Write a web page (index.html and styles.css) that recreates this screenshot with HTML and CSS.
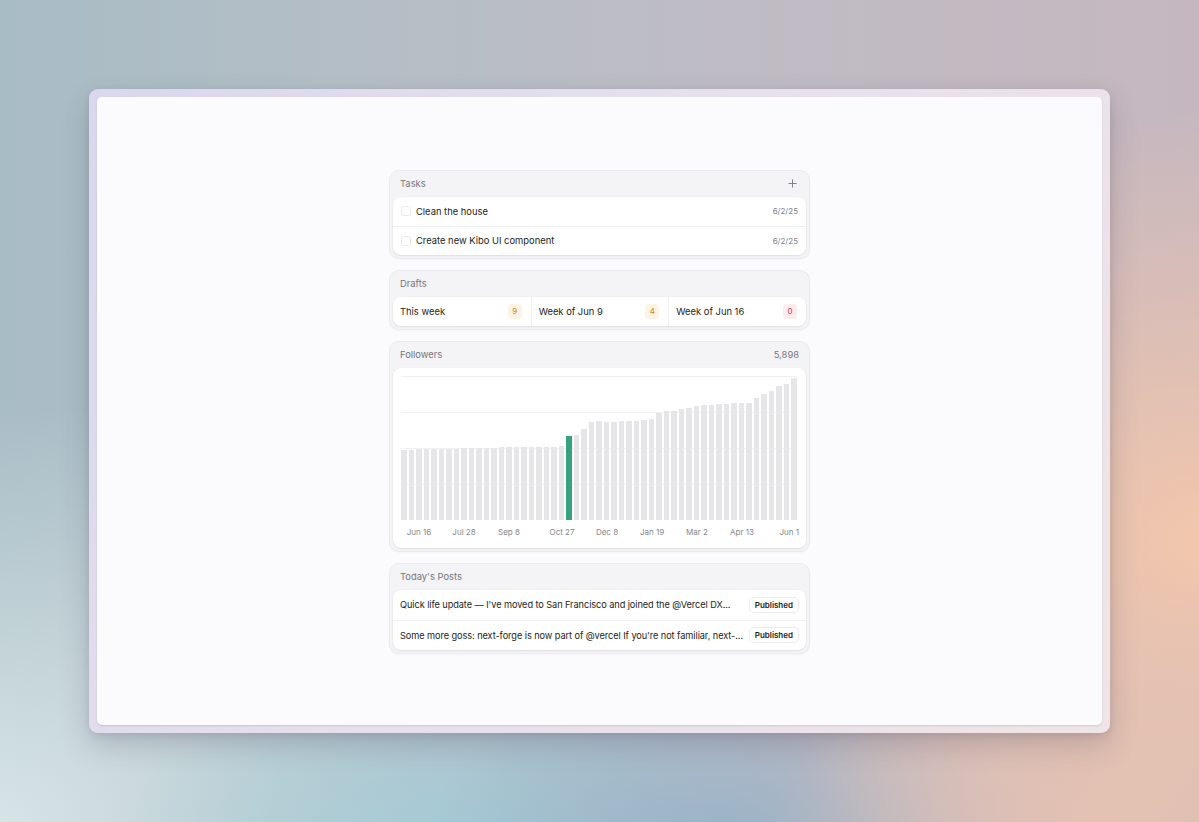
FILE: index.html
```html
<!DOCTYPE html>
<html>
<head>
<meta charset="utf-8">
<link rel="stylesheet" href="styles.css">
</head>
<body>
<div class="frame">
  <div class="page">
    <div class="stack">
      <section class="card">
        <header class="card-head">
          <span>Tasks</span>
          <svg class="plus" width="9" height="9" viewBox="0 0 10 10"><path d="M5 0.5V9.5M0.5 5H9.5" stroke="#75757c" stroke-width="1" fill="none"/></svg>
        </header>
        <div class="panel">
          <div class="task-row"><span class="check"></span><span class="task-text">Clean the house</span><span class="date">6/2/25</span></div>
          <div class="task-row"><span class="check"></span><span class="task-text">Create new Kibo UI component</span><span class="date">6/2/25</span></div>
        </div>
      </section>

      <section class="card">
        <header class="card-head"><span>Drafts</span></header>
        <div class="panel drafts">
          <div class="draft"><span>This week</span><span class="badge amber">9</span></div>
          <div class="draft"><span>Week of Jun 9</span><span class="badge amber">4</span></div>
          <div class="draft"><span>Week of Jun 16</span><span class="badge red">0</span></div>
        </div>
      </section>

      <section class="card">
        <header class="card-head"><span>Followers</span><span class="count">5,898</span></header>
        <div class="panel chart-panel">
          <div class="plot">
            <div class="bar" style="height:69.5px"></div>
            <div class="bar" style="height:70px"></div>
            <div class="bar" style="height:70.5px"></div>
            <div class="bar" style="height:70.5px"></div>
            <div class="bar" style="height:70.5px"></div>
            <div class="bar" style="height:70.5px"></div>
            <div class="bar" style="height:70.5px"></div>
            <div class="bar" style="height:71px"></div>
            <div class="bar" style="height:72px"></div>
            <div class="bar" style="height:72px"></div>
            <div class="bar" style="height:72px"></div>
            <div class="bar" style="height:72px"></div>
            <div class="bar" style="height:72px"></div>
            <div class="bar" style="height:72.3px"></div>
            <div class="bar" style="height:72.5px"></div>
            <div class="bar" style="height:72.5px"></div>
            <div class="bar" style="height:72.7px"></div>
            <div class="bar" style="height:72.8px"></div>
            <div class="bar" style="height:73px"></div>
            <div class="bar" style="height:73px"></div>
            <div class="bar" style="height:73px"></div>
            <div class="bar" style="height:73.3px"></div>
            <div class="bar active" style="height:83.3px"></div>
            <div class="bar" style="height:85px"></div>
            <div class="bar" style="height:91px"></div>
            <div class="bar" style="height:97.3px"></div>
            <div class="bar" style="height:98.3px"></div>
            <div class="bar" style="height:97.7px"></div>
            <div class="bar" style="height:98px"></div>
            <div class="bar" style="height:98.3px"></div>
            <div class="bar" style="height:98.7px"></div>
            <div class="bar" style="height:99px"></div>
            <div class="bar" style="height:99.3px"></div>
            <div class="bar" style="height:100.7px"></div>
            <div class="bar" style="height:107px"></div>
            <div class="bar" style="height:108.7px"></div>
            <div class="bar" style="height:108.3px"></div>
            <div class="bar" style="height:111px"></div>
            <div class="bar" style="height:112px"></div>
            <div class="bar" style="height:113.7px"></div>
            <div class="bar" style="height:115px"></div>
            <div class="bar" style="height:115px"></div>
            <div class="bar" style="height:115.3px"></div>
            <div class="bar" style="height:116px"></div>
            <div class="bar" style="height:116.3px"></div>
            <div class="bar" style="height:117px"></div>
            <div class="bar" style="height:117px"></div>
            <div class="bar" style="height:122px"></div>
            <div class="bar" style="height:126px"></div>
            <div class="bar" style="height:128.7px"></div>
            <div class="bar" style="height:133.3px"></div>
            <div class="bar" style="height:135.7px"></div>
            <div class="bar" style="height:141.7px"></div>
          </div>
          <div class="axis">
            <span class="tick" style="left:18px">Jun 16</span>
            <span class="tick" style="left:63px">Jul 28</span>
            <span class="tick" style="left:108px">Sep 8</span>
            <span class="tick" style="left:161px">Oct 27</span>
            <span class="tick" style="left:206px">Dec 8</span>
            <span class="tick" style="left:251px">Jan 19</span>
            <span class="tick" style="left:296px">Mar 2</span>
            <span class="tick" style="left:341px">Apr 13</span>
            <span class="tick last">Jun 1</span>
          </div>
        </div>
      </section>

      <section class="card">
        <header class="card-head"><span>Today's Posts</span></header>
        <div class="panel">
          <div class="post-row"><span class="post-text">Quick life update — I've moved to San Francisco and joined the @Vercel DX...</span><span class="status">Published</span></div>
          <div class="post-row"><span class="post-text">Some more goss: next-forge is now part of @vercel If you're not familiar, next-...</span><span class="status">Published</span></div>
        </div>
      </section>
    </div>
  </div>
</div>
</body>
</html>
```
FILE: styles.css
```css
* { box-sizing: border-box; }
html, body { margin: 0; padding: 0; }
body {
  width: 1199px;
  height: 822px;
  overflow: hidden;
  font-family: Inter, "Noto Sans", sans-serif;
  display: flex;
  align-items: center;
  justify-content: center;
  background:
    radial-gradient(ellipse 470px 430px at 1199px 540px, rgba(242,198,172,1), rgba(242,198,172,0) 100%),
    radial-gradient(ellipse 330px 220px at 1100px 840px, rgba(226,192,180,0.9), rgba(226,192,180,0) 100%),
    radial-gradient(ellipse 300px 200px at 720px 860px, rgba(150,176,198,0.95), rgba(150,176,198,0) 100%),
    radial-gradient(ellipse 360px 230px at 470px 860px, rgba(160,204,216,0.95), rgba(160,204,216,0) 100%),
    radial-gradient(ellipse 520px 420px at 0px 822px, rgba(214,228,230,1), rgba(214,228,230,0) 100%),
    linear-gradient(to right, #a8bcc5 0%, #b4bec6 30%, #bdbcc5 55%, #c6b7bf 100%);
}
.frame {
  width: 1021px;
  height: 644px;
  padding: 8px;
  border-radius: 9px;
  background: linear-gradient(120deg, #dad7ee 0%, #e6e0ec 45%, #efe5e8 100%);
  box-shadow: 0 12px 28px rgba(70, 60, 80, 0.22), 0 2px 6px rgba(70,60,80,0.12);
}
.page {
  width: 100%;
  height: 100%;
  background: #fbfafc;
  border-radius: 5px;
  box-shadow: 0 1px 2px rgba(0,0,0,0.12);
  display: flex;
  align-items: center;
  justify-content: center;
}
.stack {
  width: 421px;
  display: flex;
  flex-direction: column;
  gap: 11px;
  margin-top: 1px;
}
.card {
  background: #f4f3f6;
  border: 1px solid #ebeaee;
  border-radius: 10px;
  padding: 0 3px 3px 3px;
  box-shadow: 0 1px 2px rgba(0,0,0,0.03);
}
.card-head {
  height: 26px;
  display: flex;
  align-items: center;
  justify-content: space-between;
  padding: 0 7px 0 7px;
  font-size: 9.4px;
  color: #76767d;
}
.card-head .count { font-size: 9.4px; color: #76767d; }
.plus { display: block; margin-right: 2px; }
.panel {
  background: #ffffff;
  border-radius: 8px;
  box-shadow: 0 1px 2px rgba(0,0,0,0.07), 0 0 0 0.5px rgba(0,0,0,0.03);
  overflow: hidden;
}
.task-row {
  height: 29px;
  display: flex;
  align-items: center;
  padding: 0 8px 0 8px;
  font-size: 9.4px;
  color: #1d1d21;
}
.task-row + .task-row { border-top: 1px solid #f0eff2; }
.check {
  width: 10px;
  height: 10px;
  border: 1px solid #e9e8ed;
  border-radius: 2.5px;
  margin-right: 5px;
  flex: none;
}
.task-text { flex: 1; }
.date { font-size: 8px; color: #85858c; }
.drafts {
  display: grid;
  grid-template-columns: 1fr 1fr 1fr;
  height: 29px;
}
.draft {
  display: flex;
  align-items: center;
  justify-content: space-between;
  padding: 0 9px 0 7px;
  font-size: 9.4px;
  color: #1d1d21;
}
.draft + .draft { border-left: 1px solid #efeef1; }
.badge {
  min-width: 14px;
  height: 15px;
  border-radius: 4px;
  display: flex;
  align-items: center;
  justify-content: center;
  font-size: 8px;
  padding: 0 3px;
}
.badge.amber { background: #fdf3e4; color: #cc8420; }
.badge.red { background: #fdecee; color: #d53a4c; }
.chart-panel { padding: 8px 9px 11px 8px; }
.plot {
  height: 144px;
  display: flex;
  align-items: flex-end;
  gap: 1.6px;
  background-image: repeating-linear-gradient(to bottom, #f0eff2 0, #f0eff2 1px, transparent 1px, transparent 36px);
}
.bar {
  flex: 1;
  background: #e6e5e8;
}
.bar.active { background: #34a37e; }
.axis {
  position: relative;
  height: 10px;
  margin-top: 7px;
  font-size: 8px;
  color: #86868d;
}
.tick {
  position: absolute;
  top: 0;
  transform: translateX(-50%);
  white-space: nowrap;
  line-height: 10px;
}
.tick.last { right: -2px; transform: none; }
.post-row {
  height: 30px;
  display: flex;
  align-items: center;
  justify-content: space-between;
  gap: 5px;
  padding: 0 7px 0 7px;
  font-size: 9.2px;
  color: #1d1d21;
}
.post-row + .post-row { border-top: 1px solid #f0eff2; }
.post-text { flex: 1; min-width: 0; white-space: nowrap; overflow: hidden; letter-spacing: -0.07px; }
.status {
  flex: none;
  font-size: 8px;
  font-weight: 600;
  color: #1d1d21;
  border: 1px solid #eceaee;
  border-radius: 5px;
  height: 16px;
  padding: 0 5px;
  display: flex;
  align-items: center;
  background: #fff;
}
```
